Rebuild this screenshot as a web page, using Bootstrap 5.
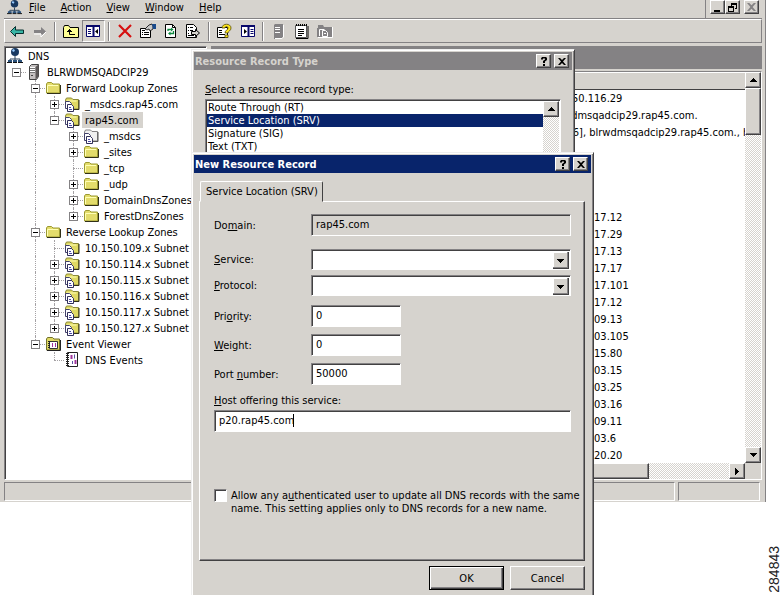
<!DOCTYPE html>
<html lang="en">
<head>
<meta charset="utf-8">
<meta name="viewport" content="width=device-width, initial-scale=1">
<title>DNS Management</title>
<link href="https://cdn.jsdelivr.net/npm/bootstrap@5.3.0/dist/css/bootstrap.min.css" rel="stylesheet">
<style>
:root{--face:#d6d3ce;--shade:#848284;--deep:#424142;--navy:#08246b}
body{font-family:Tahoma,"DejaVu Sans Condensed","DejaVu Sans",sans-serif;font-size:11px;line-height:13px;color:#000;background:#fff;min-height:100vh;overflow:hidden}
svg{display:block;flex:none;overflow:visible}
button{font:inherit;color:inherit;padding:0}
u{text-underline-offset:1px}
.raised{background:var(--face);border:1px solid;border-color:#fff var(--deep) var(--deep) #fff;box-shadow:inset -1px -1px var(--shade);border-radius:0}
.sunken{border:1px solid;border-color:var(--shade) #fff #fff var(--shade);box-shadow:inset 1px 1px var(--deep);border-radius:0}
.track{background:repeating-conic-gradient(#fff 0 25%,var(--face) 0 50%) 0 0/2px 2px}

.console{margin-right:15px;background:var(--face);border-right:1px solid var(--shade);padding:0 3px 0 4px}
.menubar{height:19px;padding-left:3px;border-bottom:1px solid var(--shade)}
.menus{gap:15px;padding:0 0 3px 7px}
.menus button,.tool{border:0;background:none}
.winbtns{padding:0 3px 5px 4px;border-left:1px solid var(--shade)}
.winbtn{width:15px;height:14px;display:flex;align-items:center;justify-content:center}
.toolbar{height:24px;border:1px solid;border-color:#fff var(--shade) var(--shade) #fff}
.tool{width:23px;height:22px;display:flex;align-items:center;justify-content:center}
.tool.pressed{border:1px solid;border-color:var(--shade) #fff #fff var(--shade)}
.toolsep{width:8px;height:19px;display:flex;justify-content:center}
.toolsep::before{content:"";width:2px;background:var(--shade);border-right:1px solid #fff}

.panes{gap:4px;margin-top:3px}
.tree{width:203px;background:#fff;padding:1px 0 0 2px}
.tree ul{list-style:none;margin:0;padding:0}
.node{display:flex;height:16px;align-items:center;white-space:nowrap}
.node .txt{padding:2px 5px 1px 3px;margin-left:2px}
.node .picked{background:var(--face)}
.cell{width:19px;height:16px;position:relative;flex:none}
.vline::before,.vend::before{content:"";position:absolute;left:9px;top:0;height:16px;border-left:1px dotted #a5a2a5}
.vend::before{height:8px}
.hline::after{content:"";position:absolute;left:9px;right:0;top:8px;border-top:1px dotted #a5a2a5}
.twist{position:absolute;z-index:1;left:5px;top:4px;width:9px;height:9px;border:1px solid var(--shade);background:#fff}
.twist::before{content:"";position:absolute;left:1px;right:1px;top:3px;height:1px;background:#000}
.twist.plus::after{content:"";position:absolute;top:1px;bottom:1px;left:3px;width:1px;background:#000}

.band{height:23px;background:var(--shade)}
.records{background:#fff;margin-top:2px}
.listing{height:391px;overflow:hidden}
.listing table{width:100%;border-collapse:collapse}
.listing th{height:17px;padding:0;background:var(--face);border-bottom:1px solid var(--deep);border-top:1px solid #fff}
.listing td{height:17px;padding:1px 0 0 338px;white-space:nowrap;line-height:15px;max-width:0;overflow:hidden}
.sbtn{width:16px;height:16px;display:flex;align-items:center;justify-content:center;flex:none}
.status{gap:3px;padding:2px 2px 1px 0}
.status div{height:19px;border:1px solid;border-color:var(--shade) #fff #fff var(--shade)}
.status .slot{width:82px}

.dlg{position:absolute;left:191px;padding:2px;background:var(--face);border:1px solid;border-color:#efefef var(--deep) var(--deep) #efefef;box-shadow:inset 1px 1px #fff,inset -1px -1px var(--shade)}
.dlg-type{top:49px;width:384px;height:120px}
.dlg-record{top:152px;width:403px;height:450px}
.caption{height:18px;font-weight:700;padding:0 3px 0 1px;gap:3px;background:var(--navy);color:#fff}
.caption.idle{background:var(--shade);color:var(--face)}
.capbtn{width:15px;height:14px;color:#000;display:flex;align-items:center;justify-content:center}
.typearea{padding:13px 11px 0}
.typebox{background:#fff;height:70px;padding:1px;margin-top:3px}
.typelist{list-style:none;margin:0;padding:0}
.typelist li{height:13px;padding-left:1px}
.typelist .on{background:var(--navy);color:#fff}

.tabs{padding:8px 0 0 6px}
.tabhead{height:21px;padding:0 4px 0 5px;border:1px solid;border-color:#fff var(--deep) var(--face) #fff;border-radius:2px 2px 0 0;background:var(--face);position:relative;margin-bottom:-1px}
.sheet{border:1px solid;border-color:#fff var(--deep) var(--deep) #fff;box-shadow:inset -1px -1px var(--shade);margin:0 6px 0 5px;padding:12px 13px 0 14px;height:360px}
.frow{display:grid;grid-template-columns:97px minmax(0,1fr);align-items:center}
.frow.tight{grid-template-columns:97px 90px}
.stackform{display:grid;row-gap:7px}
.stackform .pair{display:grid;row-gap:5px;margin:6px 0 2px}
.hostlabel{display:block;margin:2px 0 3px}
.field{font:inherit;line-height:13px;color:#000;background-color:#fff;height:22px;padding:0 4px 2px;width:100%;outline:0}
.field:disabled,.field[readonly]{background-color:var(--face);opacity:1}
select.field{height:21px;appearance:none;background-repeat:no-repeat;background-position:right 1px top 2px;background-image:url("data:image/svg+xml,%3Csvg xmlns='http://www.w3.org/2000/svg' width='16' height='17' shape-rendering='crispEdges'%3E%3Cpath fill='%23424142' d='M0 0h16v17H0z'/%3E%3Cpath fill='%23848284' d='M0 0h15v16H0z'/%3E%3Cpath fill='%23fff' d='M0 0h14v15H0z'/%3E%3Cpath fill='%23d6d3ce' d='M1 1h13v14H1z'/%3E%3Cpath d='M4 7h7v1H4zM5 8h5v1H5zM6 9h3v1H6zM7 10h1v1H7z'/%3E%3C/svg%3E")}
.hostfield{background-image:linear-gradient(#000,#000);background-repeat:no-repeat;background-size:1px 13px;background-position:78px 3px}
.allow{gap:4px;margin-top:57px}
.tick{appearance:none;width:13px;height:13px;background:#fff;margin:0;flex:none}
.actions{gap:6px;padding:5px 6px 0 0}
.push{width:75px;height:24px}
.push.first{border:1px solid #000;box-shadow:inset 1px 1px #fff,inset -1px -1px var(--deep),inset -2px -2px var(--shade)}
.figno{position:absolute;right:0;bottom:2px;writing-mode:vertical-rl;rotate:180deg;font:14px/14px "Liberation Sans",Arial,sans-serif;color:#222}
</style>
<script src="https://cdn.jsdelivr.net/npm/bootstrap@5.3.0/dist/js/bootstrap.bundle.min.js"></script>
</head>
<body class="position-relative">
<svg width="0" height="0" class="position-absolute" aria-hidden="true">
  <defs>
    <symbol id="i-dns" viewBox="0 0 16 16"><circle cx="8" cy="4" r="4" fill="#183860"/><path d="M6 1l2 1-1 2-2-1z" fill="#9cf"/><path d="M8 8v3M3 13v-2h10v2M8 11v3" stroke="#29415a" fill="none"/><path d="M1 12h4v2H1zM6 12h4v2H6zM11 12h4v2h-4z" fill="#29507b"/><path d="M0 14.500h5M6 14.500h4M11 14.500h5" stroke="#111"/></symbol>
    <symbol id="i-server" viewBox="0 0 16 16"><path d="M3.500 2.500l2-2h7v12l-2 3h-7z" fill="#c4c0c0" stroke="#444"/><path d="M9.500 3l3-2.500v12l-3 3z" fill="#5b5757"/><path d="M4 4.500h5M4 6.500h5M4 8.500h5" stroke="#777"/><path d="M4 3.500h5M4 5.500h5M4 7.500h5" stroke="#fff"/><path d="M5 11h2v1H5z" fill="#444"/></symbol>
    <symbol id="i-folder" viewBox="0 0 16 16"><path d="M1.500 13V4l1-1.500h4L8 4h6.500v9z" fill="#e3dc6b" stroke="#9c9a31"/><path d="M2.500 12V5.500H13" stroke="#ffffb5" fill="none"/><path d="M2 13.500h13.500V5" stroke="#313018" fill="none"/></symbol>
    <symbol id="i-page" viewBox="0 0 16 16"><path d="M1.500 5.500h4l2 2v5h-6z" fill="#fff" stroke="#42416b"/><path d="M3.500 8.500h4l2 2v5h-6z" fill="#fff" stroke="#31305a"/><path d="M5 11.500h2M5 13.500h3" stroke="#4a49a5"/></symbol>
    <symbol id="i-zone" viewBox="0 0 16 16"><path d="M1.500 12V4l1-2h5L9 3.500h5.500V13H8" fill="#dfd963" stroke="#8c8a39"/><path d="M9 13.500h6V4" stroke="#313018" fill="none"/><path d="M2.500 5h10" stroke="#ffffb5"/><use href="#i-page"/></symbol>
    <symbol id="i-gray" viewBox="0 0 16 16"><path d="M1.500 12V4l1-2h5L9 3.500h5.500V13H8" fill="#f0f0f0" stroke="#848284"/><path d="M10 13.500h5V4" stroke="#555" fill="none"/><use href="#i-page"/></symbol>
    <symbol id="i-viewer" viewBox="0 0 16 16"><path d="M1.500 14V3l1-1.500h5L9 3h5.500v11z" fill="#dfd963" stroke="#73712a"/><path d="M2 14.500h13.500V4" stroke="#222" fill="none"/><path d="M4.500 5.500h8v7h-8z" fill="#fff" stroke="#333"/><path d="M4 5v8" stroke="#222" stroke-width="2" stroke-dasharray="1 1"/><path d="M7.500 7v4M10.500 7v4" stroke="#a0349c"/></symbol>
    <symbol id="i-log" viewBox="0 0 16 16"><path d="M3.500.500h10v14h-10z" fill="#fff" stroke="#222"/><path d="M3.500 1v14" stroke="#222" stroke-width="3" stroke-dasharray="1 1"/><path d="M7.500 3v4M11.500 8v4" stroke="#a0349c" stroke-width="2"/><path d="M10.500 2.500v4M8.500 9v3" stroke="#5a51a5"/></symbol>
    <symbol id="a-up" viewBox="0 0 7 4"><path d="M3 0h1v1H3zM2 1h3v1H2zM1 2h5v1H1zM0 3h7v1H0z"/></symbol>
    <symbol id="a-down" viewBox="0 0 7 4"><path d="M0 0h7v1H0zM1 1h5v1H1zM2 2h3v1H2zM3 3h1v1H3z"/></symbol>
    <symbol id="g-close" viewBox="0 0 8 7"><path d="M0 0h2l2 2 2-2h2L5 3.500 8 7H6L4 5 2 7H0l3-3.500z"/></symbol>
    <symbol id="g-help" viewBox="0 0 8 9"><path d="M1 2.500V1.500L2 0h4l1 1v2L5 4.500V6H3V4l2-1.500V1.500H3v1zM3 7h2v2H3z"/></symbol>
  </defs>
</svg>

<main class="console">
  <header class="menubar d-flex">
    <div class="d-flex align-items-center flex-grow-1">
      <svg width="15" height="15" class="mb-1"><use href="#i-dns"/></svg>
      <nav class="menus d-flex" aria-label="Menu">
        <button type="button"><u>F</u>ile</button><button type="button"><u>A</u>ction</button><button type="button"><u>V</u>iew</button><button type="button"><u>W</u>indow</button><button type="button"><u>H</u>elp</button>
      </nav>
    </div>
    <div class="winbtns d-flex">
      <button class="winbtn raised" type="button" aria-label="Minimize"><svg width="9" height="9"><path d="M1 7h6v2H1z"/></svg></button>
      <button class="winbtn raised me-1" type="button" aria-label="Restore"><svg width="9" height="9"><path d="M3 0h6v6H7V5h1V2H4v1H3zM0 3h6v6H0zM1 5v3h4V5z" fill-rule="evenodd"/></svg></button>
      <button class="winbtn raised" type="button" aria-label="Close"><svg width="9" height="8" fill="#848284"><use href="#g-close"/></svg></button>
    </div>
  </header>

  <div class="toolbar d-flex align-items-center" role="toolbar" aria-label="Tools">
    <button class="tool" type="button" aria-label="Back"><svg width="14" height="11"><path d="M.500 5.500l5-5V4h8v3.500h-8v3z" fill="#39b5a5" stroke="#083030"/></svg></button>
    <button class="tool" type="button" aria-label="Forward"><svg width="14" height="11"><path d="M13 5.500L8 1v3H1v3h7v3z" fill="#848284"/><path d="M1 8h7v3l5-5" stroke="#fff" fill="none"/></svg></button>
    <span class="toolsep"></span>
    <button class="tool" type="button" aria-label="Up one level"><svg width="16" height="13"><path d="M.500 12.500v-10l1-2h4l1.500 2h8.500v10z" fill="#ffff94" stroke="#000"/><path d="M6.500 4v5.500H12M4 6.500h5M5 5.500h3" stroke="#000" fill="none"/></svg></button>
    <button class="tool pressed track" type="button" aria-label="Show tree"><svg width="15" height="13"><path d="M.500.500h13v11H.500z" fill="#fff" stroke="#08086b"/><path d="M0 1h14M7.500 1v11" stroke="#08086b" stroke-width="2"/><path d="M2 4.500h3M2 6.500h3M2 8.500h3" stroke="#08086b"/><path d="M12 4v5L9 6.500z"/></svg></button>
    <span class="toolsep"></span>
    <button class="tool" type="button" aria-label="Delete"><svg width="14" height="14"><path d="M1 1l12 12M13 1L1 13" stroke="#d61010" stroke-width="2.200"/></svg></button>
    <button class="tool" type="button" aria-label="Properties"><svg width="16" height="15"><path d="M.500 4.500h10v9h-10z" fill="#fff" stroke="#000"/><path d="M4 8.500h5M4 10.500h5M2 8.500h1M2 10.500h1M2 6.500h3" stroke="#000"/><path d="M5 5l4-4 3-1 1 2v3l-3 2-1-2-2 1z" fill="#c8c8c8" stroke="#000" stroke-width=".8"/><path d="M12 0h4v5h-3z" fill="#184a8c"/></svg></button>
    <button class="tool" type="button" aria-label="Refresh"><svg width="12" height="14"><path d="M.500.500h7l3 3v10H.500z" fill="#fff" stroke="#000"/><path d="M7.500.500v3h3" stroke="#000" fill="none"/><path d="M3 7V5.500h4M8.500 7v2.500h-4" stroke="#108a42" stroke-width="1.300" fill="none"/><path d="M6 3.500l2.500 2L6 7.500zM5.500 7.500L3 9.500l2.500 2z" fill="#108a42"/></svg></button>
    <button class="tool" type="button" aria-label="Export list"><svg width="15" height="14"><path d="M.500.500h7l3 3v10H.500z" fill="#fff" stroke="#000"/><path d="M2 3.500h1M4 3.500h3M2 6.500h1M4 6.500h3M2 9.500h1M2 11.500h6" stroke="#000"/><path d="M5.500 7.500h4v-2l4 3.500-4 3.500v-2h-4z" fill="#d6d3ce" stroke="#000"/></svg></button>
    <span class="toolsep"></span>
    <button class="tool" type="button" aria-label="Help"><svg width="15" height="15"><path d="M.500 3.500h10v10H.500z" fill="#fff" stroke="#000"/><path d="M2 6.500h3M2 8.500h3M2 10.500h6" stroke="#000"/><path d="M5 4c0-5 9-5 9 0 0 3-3 3-3 5H8c0-3 3-3 3-5s-3-2-3 0zM8 11h3v2.500H8z" fill="#ffe718" stroke="#52490c" stroke-width=".8"/></svg></button>
    <button class="tool" type="button" aria-label="Show pane"><svg width="14" height="13"><path d="M.500.500h13v11H.500z" fill="#fff" stroke="#08086b"/><path d="M0 1h14M7.500 1v11" stroke="#08086b" stroke-width="2"/><path d="M9.500 4.500h3M9.500 6.500h3M9.500 8.500h3" stroke="#08086b"/><path d="M3 4v5l3-2.500z"/></svg></button>
    <span class="toolsep"></span>
    <button class="tool" type="button" aria-label="Server" disabled><svg width="12" height="15"><path d="M1 1l1-1h8v13l-2 2H1z" fill="#848284"/><path d="M2 3.500h5M2 5.500h5M2 8.500h5M2 14.500h7l1.500-1.500V1" stroke="#fff" fill="none"/></svg></button>
    <button class="tool" type="button" aria-label="New record"><svg width="13" height="15"><path d="M.500 1.500h11v12H.500z" fill="#fff" stroke="#555"/><path d="M1 1h11" stroke="#000" stroke-width="2" stroke-dasharray="1 1"/><path d="M3 5.500h6M3 7.500h6M3 9.500h6M3 11.500h4M1 14.500h12V2" stroke="#000" fill="none"/></svg></button>
    <button class="tool" type="button" aria-label="New zone" disabled><svg width="16" height="14"><path d="M0 4h1V1h5l1 2h8v10H0z" fill="#848284"/><path d="M2.500 12V5.500h5M1 13.500h14.500V3M5.500 6.500h3l2 2v4h-5zM7 9.500h2" stroke="#fff" fill="none"/></svg></button>
  </div>

  <div class="panes d-flex">
    <section class="tree sunken" aria-label="Console tree">
      <ul>
        <li class="node"><svg width="16" height="16"><use href="#i-dns"/></svg><span class="txt">DNS</span></li>
        <li class="node"><i class="cell hline"><b class="twist"></b></i><svg width="16" height="16"><use href="#i-server"/></svg><span class="txt">BLRWDMSQADCIP29</span></li>
        <li class="node"><i class="cell"></i><i class="cell hline vline"><b class="twist"></b></i><svg width="16" height="16"><use href="#i-folder"/></svg><span class="txt">Forward Lookup Zones</span></li>
        <li class="node"><i class="cell"></i><i class="cell vline"></i><i class="cell hline vline"><b class="twist plus"></b></i><svg width="16" height="16"><use href="#i-zone"/></svg><span class="txt">_msdcs.rap45.com</span></li>
        <li class="node"><i class="cell"></i><i class="cell vline"></i><i class="cell hline vend"><b class="twist"></b></i><svg width="16" height="16"><use href="#i-zone"/></svg><span class="txt picked">rap45.com</span></li>
        <li class="node"><i class="cell"></i><i class="cell vline"></i><i class="cell"></i><i class="cell hline vline"><b class="twist plus"></b></i><svg width="16" height="16"><use href="#i-gray"/></svg><span class="txt">_msdcs</span></li>
        <li class="node"><i class="cell"></i><i class="cell vline"></i><i class="cell"></i><i class="cell hline vline"><b class="twist plus"></b></i><svg width="16" height="16"><use href="#i-folder"/></svg><span class="txt">_sites</span></li>
        <li class="node"><i class="cell"></i><i class="cell vline"></i><i class="cell"></i><i class="cell hline vline"></i><svg width="16" height="16"><use href="#i-folder"/></svg><span class="txt">_tcp</span></li>
        <li class="node"><i class="cell"></i><i class="cell vline"></i><i class="cell"></i><i class="cell hline vline"><b class="twist plus"></b></i><svg width="16" height="16"><use href="#i-folder"/></svg><span class="txt">_udp</span></li>
        <li class="node"><i class="cell"></i><i class="cell vline"></i><i class="cell"></i><i class="cell hline vline"><b class="twist plus"></b></i><svg width="16" height="16"><use href="#i-folder"/></svg><span class="txt">DomainDnsZones</span></li>
        <li class="node"><i class="cell"></i><i class="cell vline"></i><i class="cell"></i><i class="cell hline vend"><b class="twist plus"></b></i><svg width="16" height="16"><use href="#i-folder"/></svg><span class="txt">ForestDnsZones</span></li>
        <li class="node"><i class="cell"></i><i class="cell hline vline"><b class="twist"></b></i><svg width="16" height="16"><use href="#i-folder"/></svg><span class="txt">Reverse Lookup Zones</span></li>
        <li class="node"><i class="cell"></i><i class="cell vline"></i><i class="cell hline vline"></i><svg width="16" height="16"><use href="#i-zone"/></svg><span class="txt">10.150.109.x Subnet</span></li>
        <li class="node"><i class="cell"></i><i class="cell vline"></i><i class="cell hline vline"><b class="twist plus"></b></i><svg width="16" height="16"><use href="#i-zone"/></svg><span class="txt">10.150.114.x Subnet</span></li>
        <li class="node"><i class="cell"></i><i class="cell vline"></i><i class="cell hline vline"><b class="twist plus"></b></i><svg width="16" height="16"><use href="#i-zone"/></svg><span class="txt">10.150.115.x Subnet</span></li>
        <li class="node"><i class="cell"></i><i class="cell vline"></i><i class="cell hline vline"><b class="twist plus"></b></i><svg width="16" height="16"><use href="#i-zone"/></svg><span class="txt">10.150.116.x Subnet</span></li>
        <li class="node"><i class="cell"></i><i class="cell vline"></i><i class="cell hline vline"><b class="twist plus"></b></i><svg width="16" height="16"><use href="#i-zone"/></svg><span class="txt">10.150.117.x Subnet</span></li>
        <li class="node"><i class="cell"></i><i class="cell vline"></i><i class="cell hline vend"><b class="twist plus"></b></i><svg width="16" height="16"><use href="#i-zone"/></svg><span class="txt">10.150.127.x Subnet</span></li>
        <li class="node"><i class="cell"></i><i class="cell hline vend"><b class="twist"></b></i><svg width="16" height="16"><use href="#i-viewer"/></svg><span class="txt">Event Viewer</span></li>
        <li class="node"><i class="cell"></i><i class="cell"></i><i class="cell hline vend"></i><svg width="16" height="16"><use href="#i-log"/></svg><span class="txt">DNS Events</span></li>
      </ul>
    </section>

    <section class="flex-grow-1" aria-label="Records">
      <div class="band"></div>
      <div class="records sunken">
        <div class="d-flex">
          <div class="listing flex-grow-1">
            <table>
              <thead><tr><th aria-label="Data"></th></tr></thead>
              <tbody>
                <tr><td>10.150.116.29</td></tr>
                <tr><td>blrwdmsqadcip29.rap45.com.</td></tr>
                <tr><td>[1286], blrwdmsqadcip29.rap45.com., hostmaster</td></tr>
                <tr><td></td></tr><tr><td></td></tr><tr><td></td></tr><tr><td></td></tr>
                <tr><td>10.150.117.12</td></tr>
                <tr><td>10.150.117.29</td></tr>
                <tr><td>10.150.117.13</td></tr>
                <tr><td>10.150.117.17</td></tr>
                <tr><td>10.150.117.101</td></tr>
                <tr><td>10.150.117.12</td></tr>
                <tr><td>10.150.109.13</td></tr>
                <tr><td>10.150.103.105</td></tr>
                <tr><td>10.150.115.80</td></tr>
                <tr><td>10.150.103.15</td></tr>
                <tr><td>10.150.103.25</td></tr>
                <tr><td>10.150.103.16</td></tr>
                <tr><td>10.150.109.11</td></tr>
                <tr><td>10.150.103.6</td></tr>
                <tr><td>10.150.120.20</td></tr>
              </tbody>
            </table>
          </div>
          <div class="track d-flex flex-column">
            <button class="sbtn raised" type="button" aria-label="Scroll up"><svg width="7" height="4"><use href="#a-up"/></svg></button>
            <div class="raised" style="height:12%"></div>
            <button class="sbtn raised mt-auto" type="button" aria-label="Scroll down"><svg width="7" height="4"><use href="#a-down"/></svg></button>
          </div>
        </div>
        <div class="d-flex" style="background:var(--face)">
          <div class="track d-flex flex-grow-1">
            <div class="raised" style="width:82%"></div>
            <button class="sbtn raised ms-auto" type="button" aria-label="Scroll right"><svg width="4" height="7"><path d="M0 0h1v7H0zM1 1h1v5H1zM2 2h1v3H2zM3 3h1v1H3z"/></svg></button>
          </div>
          <div class="sbtn"></div>
        </div>
      </div>
    </section>
  </div>
  <footer class="status d-flex"><div class="flex-grow-1"></div><div class="slot"></div></footer>
</main>

<section class="dlg dlg-type" role="dialog" aria-label="Resource Record Type">
  <div class="caption idle d-flex align-items-center">
    <span class="flex-grow-1">Resource Record Type</span>
    <button class="capbtn raised" type="button" aria-label="Help"><svg width="8" height="9"><use href="#g-help"/></svg></button>
    <button class="capbtn raised" type="button" aria-label="Close"><svg width="8" height="7"><use href="#g-close"/></svg></button>
  </div>
  <div class="typearea">
    <div><u>S</u>elect a resource record type:</div>
    <div class="typebox sunken d-flex">
      <ul class="typelist flex-grow-1">
        <li>Route Through (RT)</li><li class="on">Service Location (SRV)</li><li>Signature (SIG)</li><li>Text (TXT)</li>
      </ul>
      <div class="track"><button class="sbtn raised" type="button" aria-label="Scroll types up"><svg width="7" height="4"><use href="#a-up"/></svg></button></div>
    </div>
  </div>
</section>

<form class="dlg dlg-record" role="dialog" aria-label="New Resource Record">
  <div class="caption d-flex align-items-center">
    <span class="flex-grow-1">New Resource Record</span>
    <button class="capbtn raised" type="button" aria-label="Help"><svg width="8" height="9"><use href="#g-help"/></svg></button>
    <button class="capbtn raised" type="button" aria-label="Close"><svg width="8" height="7"><use href="#g-close"/></svg></button>
  </div>
  <div class="tabs d-flex"><button class="tabhead" type="button">Service Location (SRV)</button></div>
  <div class="sheet">
    <div class="stackform">
      <div class="frow"><label for="f-domain">Do<u>m</u>ain:</label><input id="f-domain" class="field sunken" value="rap45.com" readonly></div>
      <div class="pair">
        <div class="frow"><label for="f-service"><u>S</u>ervice:</label><select id="f-service" class="field sunken"><option></option></select></div>
        <div class="frow"><label for="f-protocol"><u>P</u>rotocol:</label><select id="f-protocol" class="field sunken"><option></option></select></div>
      </div>
      <div class="frow tight"><label for="f-priority">Pri<u>o</u>rity:</label><input id="f-priority" class="field sunken" value="0"></div>
      <div class="frow tight"><label for="f-weight"><u>W</u>eight:</label><input id="f-weight" class="field sunken" value="0"></div>
      <div class="frow tight"><label for="f-port">Port <u>n</u>umber:</label><input id="f-port" class="field sunken" value="50000"></div>
      <div><label for="f-host" class="hostlabel"><u>H</u>ost offering this service:</label><input id="f-host" class="field hostfield sunken" value="p20.rap45.com"></div>
    </div>
    <div class="allow d-flex">
      <input type="checkbox" id="f-allow" class="tick sunken"><label for="f-allow" class="text-nowrap">Allow any a<u>u</u>thenticated user to update all DNS records with the same<br>name. This setting applies only to DNS records for a new name.</label>
    </div>
  </div>
  <div class="actions d-flex justify-content-end">
    <button class="push raised first" type="submit">OK</button><button class="push raised" type="button">Cancel</button>
  </div>
</form>

<div class="figno">284843</div>
</body>
</html>
